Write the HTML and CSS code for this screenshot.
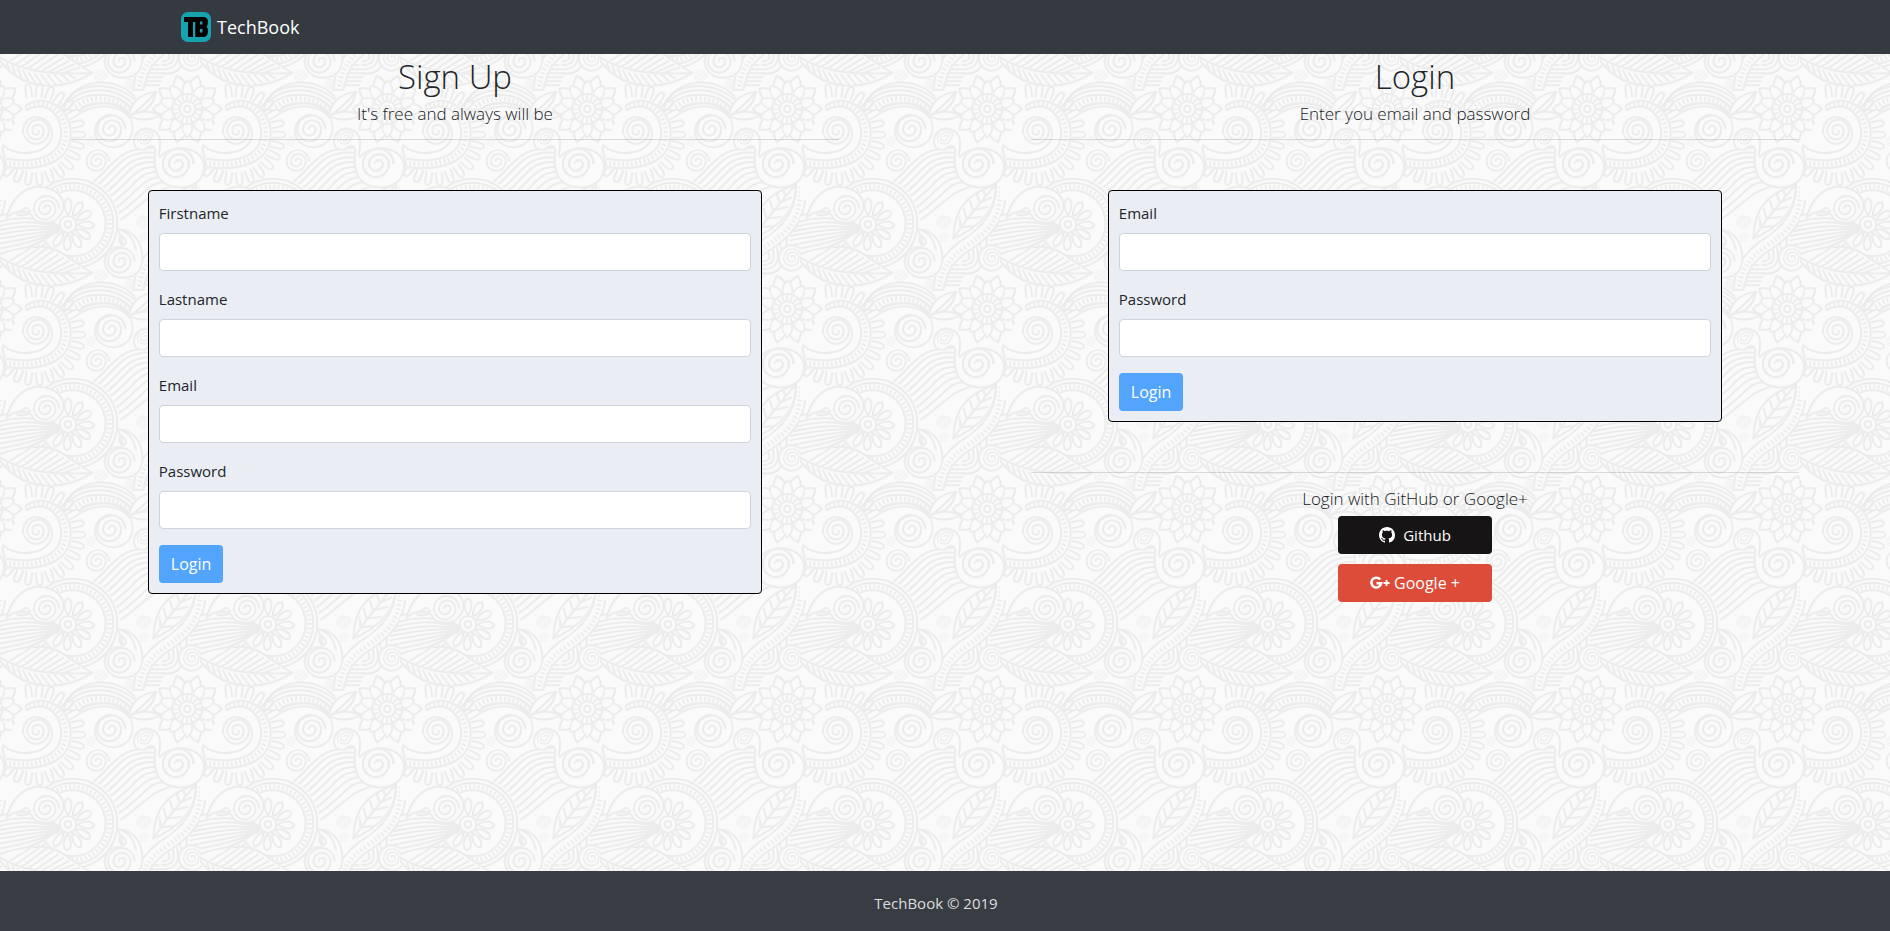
FILE: index.html
```html
<!DOCTYPE html>
<html lang="en">
<head>
<meta charset="utf-8">
<title>TechBook</title>
<link rel="stylesheet" href="styles.css">
</head>
<body>
<header class="navbar">
  <a class="brand" href="#">
    <svg class="brand-logo" viewBox="0 0 30 30" aria-hidden="true">
      <rect width="30" height="30" rx="7" fill="#17a2b0"/>
      <path fill="#000" d="M3 5h12v5h-3v15H7V10H3z"/>
      <path fill="#000" fill-rule="evenodd" d="M14 5h8q5 0 5 5 0 3.500-1.500 4.500 1.500 1.500 1.500 4.500 0 6-5 6h-8zM19 9.500v3h2.500v-3zM19 17v3.500h2.500V17z"/>
      <path d="M13.800 10v15" stroke="#17a2b0" stroke-width=".8"/>
    </svg>
    <span>TechBook</span>
  </a>
</header>

<main class="page">
  <svg class="backdrop" aria-hidden="true">
    <defs>
      <path id="spiral" d="M-4 0a10 10 0 0 1 20 0a18 18 0 0 1-36 0a26 26 0 0 1 52 0a34 34 0 0 1-68 0a40 40 0 0 1 80 0"/>
      <path id="petal" d="M0-28C-14-48-14-72 0-78C14-72 14-48 0-28z"/>
      <path id="ray" d="M-9-112V-136Q-9-152 0-152T9-136V-112"/>
      <path id="leaflet" d="M0-42C-26-58-22-84 0-104C22-84 26-58 0-42z"/>
      <g id="motif">
        <!-- flowing bands -->
        <path d="M280 545C340 500 350 440 462 444M296 552C350 510 362 452 462 458M310 562C365 520 376 468 462 472M322 574C380 530 390 482 462 486M332 588C392 545 405 498 466 501M342 604C404 560 418 514 472 516M350 622C414 575 430 532 480 532M356 640C430 590 440 550 492 546M360 660C440 605 456 572 510 562"/>
        <!-- beaded stem -->
        <path class="solid" d="M618-40C618 70 570 110 510 150C455 185 440 220 430 270L400 270C405 210 420 170 480 125C550 80 585 40 588-40"/>
        <path class="beads" d="M603-40C600 70 560 95 500 138C435 180 425 220 415 270"/>
        <!-- veined leaf -->
        <path class="solid" d="M460 116C462 30 500-20 588-46C590 30 540 80 460 116z"/>
        <path d="M460 116Q510 40 588-46M478 50L482 82L522 78M490 24L500 56L544 50M508 0L520 30L564 20M530-18L540 8L576-8M550-30L556-14"/>
        <!-- medallion -->
        <circle class="solid" cx="218" cy="70" r="134"/>
        <circle cx="218" cy="70" r="122"/>
        <circle class="beads" cx="218" cy="70" r="110"/>
        <circle cx="218" cy="70" r="99"/>
        <!-- fan -->
        <path class="solid" d="M184 88C120 20 40 30-40 60V165C40 165 120 130 184 88z"/>
        <path d="M184 86C110 42 40 52-30 72M184 87C110 56 40 66-30 84M184 88C110 70 40 80-30 96M184 88C110 84 40 94-30 108M184 89C110 98 40 108-30 121M184 90C110 112 40 124-30 136M184 90C110 126 40 140-30 150"/>
        <path class="solid" d="M20 52C40-20 90-50 140-36C190-24 204 20 176 52C150 78 100 70 94 44C60 20 40 40 20 52z"/>
        <use href="#spiral" transform="translate(136 26) scale(.95)"/>
        <path d="M50 44Q80 10 90 34Q84 50 50 44"/>
        <g transform="translate(204 73)">
          <use href="#petal"/><use href="#petal" transform="rotate(32)"/><use href="#petal" transform="rotate(62)"/><use href="#petal" transform="rotate(92)"/><use href="#petal" transform="rotate(122)"/><use href="#petal" transform="rotate(152)"/><use href="#petal" transform="rotate(182)"/><use href="#petal" transform="rotate(212)"/>
          <circle class="solid" r="25"/><circle r="10"/>
        </g>
        <!-- feathered leaf -->
        <path class="solid" d="M-10 166C60 140 100 140 140 142C190 150 220 190 278 218C190 275 60 280-10 166z"/>
        <path d="M-10 166C70 220 180 226 278 218M30 182L92 144M48 192L118 144M66 200L140 146M84 206L160 152M104 211L176 162M124 214L192 172M144 217L208 182M166 218L224 192M190 219L240 202M20 188L30 216M36 196L50 232M52 204L70 244M68 210L90 252M86 216L110 257M104 220L130 260M122 222L150 258M142 224L170 256M162 224L188 250M184 224L208 244M206 223L226 236"/>
        <!-- scrolls -->
        <path class="solid" d="M354 88C410 90 432 140 426 190C420 236 350 250 322 210C300 170 330 135 366 142C370 120 360 110 354 88z"/>
        <use href="#spiral" transform="translate(360 184)"/>
        <path d="M362 104Q350 124 370 136Q390 128 362 104M366 92Q396 100 408 150"/>
        <use href="#spiral" transform="translate(430 68) scale(.5)"/>
        <use href="#spiral" transform="translate(302 230) scale(.46)"/>
        <use href="#spiral" transform="translate(388 252) scale(.36)"/>
        <use href="#spiral" transform="translate(432 112) scale(.32)"/>
        <path d="M452 196H478M448 208H488M444 220H500M440 232H490M438 244H484M434 256H480M530 140Q550 210 480 208M518 148Q532 196 484 196M506 158Q514 186 486 184M540 132Q570 222 490 222"/>
        <circle class="solid" cx="575" cy="174" r="38"/>
        <use href="#spiral" transform="translate(575 174) scale(.68)"/>
        <!-- arches -->
        <path class="solid" d="M190 330C220 220 370 230 410 300L390 350C370 300 280 300 240 330z"/>
        <path d="M196 306C240 240 350 246 402 300M204 308C250 256 350 260 398 312M214 312C260 272 350 274 394 324M236 330C280 296 360 304 386 346"/>
        <path class="beads" d="M226 320C270 284 350 290 390 334"/>
        <path class="solid" d="M240 340C300 300 400 320 398 386C394 450 310 460 288 410C278 370 300 350 330 344"/>
        <use href="#spiral" transform="translate(330 388) scale(1.05)"/>
        <use href="#spiral" transform="translate(272 425) scale(.36)"/>
        <use href="#spiral" transform="translate(290 484) scale(.85)"/>
        <!-- daisy -->
        <g transform="translate(562 327)">
          <g transform="rotate(18)"><use class="solid" href="#leaflet"/><use class="solid" href="#leaflet" transform="rotate(36)"/><use class="solid" href="#leaflet" transform="rotate(72)"/><use class="solid" href="#leaflet" transform="rotate(108)"/><use class="solid" href="#leaflet" transform="rotate(144)"/><use class="solid" href="#leaflet" transform="rotate(180)"/><use class="solid" href="#leaflet" transform="rotate(216)"/><use class="solid" href="#leaflet" transform="rotate(252)"/><use class="solid" href="#leaflet" transform="rotate(288)"/><use class="solid" href="#leaflet" transform="rotate(324)"/></g>
          <g transform="scale(.82)"><use class="solid" href="#leaflet"/><use class="solid" href="#leaflet" transform="rotate(36)"/><use class="solid" href="#leaflet" transform="rotate(72)"/><use class="solid" href="#leaflet" transform="rotate(108)"/><use class="solid" href="#leaflet" transform="rotate(144)"/><use class="solid" href="#leaflet" transform="rotate(180)"/><use class="solid" href="#leaflet" transform="rotate(216)"/><use class="solid" href="#leaflet" transform="rotate(252)"/><use class="solid" href="#leaflet" transform="rotate(288)"/><use class="solid" href="#leaflet" transform="rotate(324)"/></g>
          <circle class="solid" r="45"/><circle class="beads" r="34"/><circle r="24"/><circle r="10"/>
        </g>
        <path class="solid" d="M388 350C390 310 420 280 468 276C460 320 430 340 388 350z"/>
        <path class="solid" d="M388 350C420 328 450 330 482 346C450 362 420 362 388 350zM388 350Q430 320 468 276"/>
        <!-- rayed wheel -->
        <g transform="translate(104 404)">
          <use href="#ray" transform="rotate(-8)"/><use href="#ray" transform="rotate(6)"/><use href="#ray" transform="rotate(20)"/><use href="#ray" transform="rotate(34)"/><use href="#ray" transform="rotate(48)"/><use href="#ray" transform="rotate(62)"/><use href="#ray" transform="rotate(76)"/><use href="#ray" transform="rotate(90)"/><use href="#ray" transform="rotate(104)"/><use href="#ray" transform="rotate(118)"/><use href="#ray" transform="rotate(132)"/><use href="#ray" transform="rotate(146)"/><use href="#ray" transform="rotate(160)"/><use href="#ray" transform="rotate(174)"/><use href="#ray" transform="rotate(188)"/><use href="#ray" transform="rotate(202)"/><use href="#ray" transform="rotate(216)"/>
          <path class="solid" d="M-28-88C40-130 110-70 108 0C108 70 40 112-84 98L-98 36"/>
          <path d="M-28-72C36-108 80-60 80 0C76 60 10 90-84 72"/>
          <path class="beads" d="M-28-80C40-116 94-64 94 0C92 66 20 100-84 86"/>
          <path d="M-96 30C-60 70 56 64 52-8C44-70-44-66-34 0"/>
        </g>
        <use href="#spiral" transform="translate(112 392) rotate(160) scale(.95)"/>
        <!-- lower scroll -->
        <path class="solid" d="M402 430C396 376 470 370 480 420C484 450 470 460 480 470C520 430 600 440 612 490C616 540 580 566 530 562C480 556 456 520 466 450C462 430 440 440 434 450C414 450 404 440 402 430z"/>
        <use href="#spiral" transform="translate(434 412) scale(.6)"/>
        <use href="#spiral" transform="translate(530 492) scale(1.15)"/>
      </g>
      <pattern id="paisley" width="200" height="200" patternUnits="userSpaceOnUse" viewBox="0 0 600 600" y="-54">
        <rect class="ground" width="600" height="600"/>
        <g class="lines">
          <use href="#motif" y="-600"/><use href="#motif" x="-600"/><use href="#motif" x="600"/><use href="#motif"/><use href="#motif" y="600"/>
        </g>
      </pattern>
    </defs>
    <rect width="100%" height="100%" fill="url(#paisley)"/>
  </svg>

  <section class="column">
    <h1 class="title">Sign Up</h1>
    <p class="lead">It's free and always will be</p>
    <hr class="rule">
    <form class="card">
      <div class="field"><label for="su-first">Firstname</label><input id="su-first" type="text"></div>
      <div class="field"><label for="su-last">Lastname</label><input id="su-last" type="text"></div>
      <div class="field"><label for="su-email">Email</label><input id="su-email" type="email"></div>
      <div class="field"><label for="su-pass">Password</label><input id="su-pass" type="password"></div>
      <button class="btn btn-primary" type="submit">Login</button>
    </form>
  </section>

  <section class="column">
    <h1 class="title">Login</h1>
    <p class="lead">Enter you email and password</p>
    <hr class="rule">
    <form class="card">
      <div class="field"><label for="li-email">Email</label><input id="li-email" type="email"></div>
      <div class="field"><label for="li-pass">Password</label><input id="li-pass" type="password"></div>
      <button class="btn btn-primary" type="submit">Login</button>
    </form>
    <hr class="rule">
    <div class="social">
      <p class="lead">Login with GitHub or Google+</p>
      <button class="btn btn-social btn-github" type="button">
        <svg width="16" height="16" viewBox="0 0 16 16" fill="currentColor" aria-hidden="true"><path d="M8 0C3.580 0 0 3.580 0 8c0 3.540 2.290 6.530 5.470 7.590.4.070.55-.17.55-.38 0-.19-.01-.82-.01-1.490-2.010.37-2.530-.49-2.690-.94-.09-.23-.48-.94-.82-1.130-.28-.15-.68-.52-.01-.53.63-.01 1.080.58 1.230.82.72 1.210 1.870.87 2.330.66.07-.52.28-.87.51-1.070-1.780-.2-3.640-.89-3.640-3.950 0-.87.31-1.590.82-2.150-.08-.2-.36-1.020.08-2.120 0 0 .67-.21 2.200.82.64-.18 1.320-.27 2-.27s1.360.09 2 .27c1.530-1.040 2.200-.82 2.200-.82.44 1.100.16 1.920.08 2.120.51.56.82 1.270.82 2.150 0 3.070-1.870 3.750-3.650 3.950.29.25.54.73.54 1.480 0 1.070-.01 1.930-.01 2.200 0 .21.15.46.55.38A8.010 8.010 0 0 0 16 8c0-4.420-3.580-8-8-8z"/></svg>
        <span class="github-text">Github</span>
      </button>
      <button class="btn btn-social btn-google" type="button">
        <svg width="20" height="14" viewBox="0 0 20 14" fill="none" stroke="currentColor" aria-hidden="true"><path d="M10.200 3.500A4.900 4.900 0 1 0 11.200 7.200H6.500" stroke-width="2.500"/><path d="M16.500 4v6M13.500 7h6" stroke-width="1.800"/></svg>
        <span>Google +</span>
      </button>
    </div>
  </section>
</main>

<footer class="footer">TechBook © 2019</footer>
</body>
</html>
```
FILE: styles.css
```css
* { box-sizing: border-box; }

body {
  margin: 0;
  min-height: 100vh;
  display: flex;
  flex-direction: column;
  background: #fafafa;
  color: #212529;
  font: 15px/24px "Open Sans", "Noto Sans", sans-serif;
}

.navbar {
  display: flex;
  align-items: center;
  height: 54px;
  padding: 0 181px;
  background: #343a40;
}

.brand {
  display: flex;
  align-items: center;
  gap: 6px;
  color: #fff;
  font-size: 18px;
  text-decoration: none;
}

.brand-logo { width: 30px; height: 30px; }

.page {
  position: relative;
  flex: 1;
  display: grid;
  grid-template-columns: 1fr 1fr;
  align-items: start;
  column-gap: 192px;
  padding: 4px 91px 24px 71px;
}

.backdrop {
  position: absolute;
  inset: 0;
  z-index: -1;
  width: 100%;
  height: 100%;
}

.ground { fill: #fafafa; }
.lines { fill: none; stroke: #ececec; stroke-width: 6; }
.solid { fill: #fafafa; }
.beads { stroke-width: 14; stroke-dasharray: 5 8; }

.column { text-align: center; }

.title {
  margin: 0 0 6px;
  font-size: 33px;
  line-height: 38px;
  font-weight: 300;
}

.lead {
  margin: 0;
  color: #16191d;
  font-size: 17px;
  font-weight: 300;
}

.rule {
  height: 1px;
  margin: 13px 0 50px;
  border: 0;
  background: rgba(0, 0, 0, 0.12);
}

.card {
  width: 80%;
  margin: 0 auto 50px;
  padding: 10px;
  border: 1px solid #000;
  border-radius: 4px;
  background: #eaeef4;
  text-align: left;
}

.card + .rule { margin-bottom: 14px; }

.field { margin-bottom: 16px; }

.field label {
  display: block;
  width: fit-content;
  margin-bottom: 8px;
}

.field input {
  display: block;
  width: 100%;
  height: 38px;
  padding: 6px 12px;
  border: 1px solid #ced4da;
  border-radius: 4px;
  background: #fff;
  font: inherit;
}

.btn {
  height: 38px;
  padding: 0 12px;
  border: 0;
  border-radius: 4px;
  color: #fff;
  font: inherit;
  font-size: 16px;
}

.btn-primary { display: block; background: #52a4fd; }

.social {
  display: flex;
  flex-direction: column;
  align-items: center;
}

.btn-social {
  display: flex;
  align-items: center;
  justify-content: center;
  gap: 4px;
  width: 154px;
  margin-top: 5px;
}

.btn-social + .btn-social { margin-top: 10px; }
.github-text { margin-left: 4px; font-size: 15px; }
.btn-github { background: #161415; }
.btn-google { background: #dd4b39; }

.footer {
  min-height: 60px;
  padding: 20px 38px 16px 20px;
  background: #383d44;
  color: #dcdddf;
  text-align: center;
}
```
